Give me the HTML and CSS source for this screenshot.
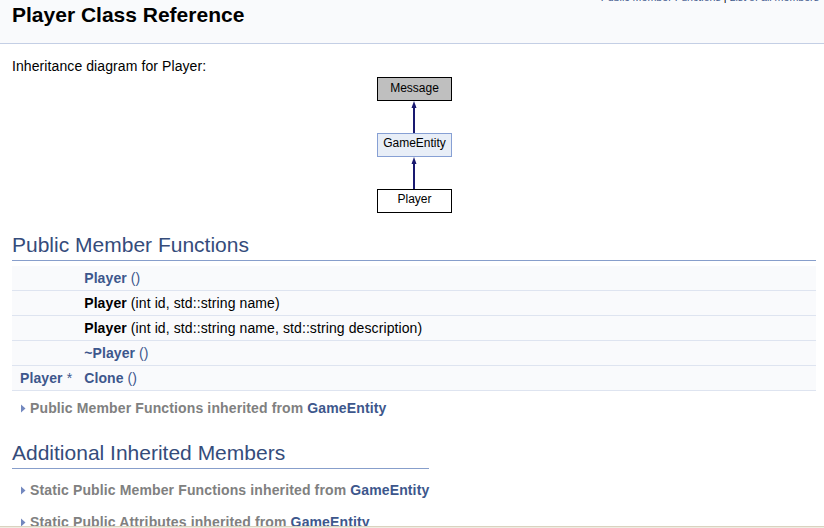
FILE: index.html
```html
<!DOCTYPE html>
<html>
<head>
<meta charset="utf-8">
<title>Player Class Reference</title>
<link rel="stylesheet" href="styles.css">
</head>
<body>
<div class="header">
  <div class="summary"><a href="#pub-methods">Public Member Functions</a> | <a href="#all">List of all members</a></div>
  <div class="title">Player Class Reference</div>
</div>
<div class="contents">
  <p class="intro">Inheritance diagram for Player:</p>
  <div class="diagram">
    <svg width="78" height="136" viewBox="0 0 78 136">
      <rect x="2.5" y="0.5" width="74" height="23" fill="#BFBFBF" stroke="#000"/>
      <text x="39.5" y="15" class="dtext">Message</text>
      <path d="M39 30V56" stroke="#191970" stroke-width="2"/>
      <polygon points="39,24 36.5,31 41.5,31" fill="#191970"/>
      <rect x="2.5" y="56.5" width="74" height="23" fill="#E8EEF7" stroke="#87A0D4"/>
      <text x="39.5" y="70" class="dtext">GameEntity</text>
      <path d="M39 86V112" stroke="#191970" stroke-width="2"/>
      <polygon points="39,80 36.5,87 41.5,87" fill="#191970"/>
      <rect x="2.5" y="112.5" width="74" height="23" fill="#FFFFFF" stroke="#000"/>
      <text x="39.5" y="126" class="dtext">Player</text>
    </svg>
  </div>
  <h2 class="groupheader" id="pub-methods">Public Member Functions</h2>
  <table class="memberdecls">
    <tr><td class="ml"></td><td class="mr"><a class="el" href="#a1">Player</a> <span class="lk">()</span></td></tr>
    <tr><td class="ml"></td><td class="mr"><b>Player</b> (int id, std::string name)</td></tr>
    <tr><td class="ml"></td><td class="mr"><b>Player</b> (int id, std::string name, std::string description)</td></tr>
    <tr><td class="ml"></td><td class="mr"><a class="el" href="#a4">~Player</a> <span class="lk">()</span></td></tr>
    <tr><td class="ml"><a class="el" href="#top">Player</a><span class="lk"> *</span>&#160;</td><td class="mr"><a class="el" href="#a5">Clone</a> <span class="lk">()</span></td></tr>
  </table>
  <div class="inherit">
    <svg viewBox="0 0 9 9"><polygon points="4,0.5 8.5,4.5 4,8.5"/></svg>
    <span>Public Member Functions inherited from <a class="el" href="#ge">GameEntity</a></span>
  </div>
  <div class="additional">
    <h2 class="groupheader">Additional Inherited Members</h2>
    <div class="inherit">
      <svg viewBox="0 0 9 9"><polygon points="4,0.5 8.5,4.5 4,8.5"/></svg>
      <span>Static Public Member Functions inherited from <a class="el" href="#ge">GameEntity</a></span>
    </div>
    <div class="inherit">
      <svg viewBox="0 0 9 9"><polygon points="4,0.5 8.5,4.5 4,8.5"/></svg>
      <span>Static Public Attributes inherited from <a class="el" href="#ge">GameEntity</a></span>
    </div>
  </div>
</div>
<div class="bottombar"></div>
</body>
</html>
```

FILE: styles.css
```css
html, body {
  margin: 0;
  padding: 0;
  background: #FFFFFF;
}
body {
  font-family: "Liberation Sans", Arial, sans-serif;
  font-size: 14px;
  line-height: 22px;
  color: #000000;
}
a {
  color: #3D578C;
  text-decoration: none;
}
a.el {
  font-weight: bold;
}
.header {
  height: 43px;
  background: #F9FAFC;
  border-bottom: 1px solid #C4CFE5;
  display: flex;
  flex-direction: column;
  padding-left: 12px;
}
.summary {
  margin-top: -10px;
  height: 14px;
  line-height: 14px;
  font-size: 10.67px;
  text-align: right;
  padding-right: 5px;
}
.title {
  font-size: 21px;
  font-weight: bold;
  line-height: 22px;
}
.contents {
  padding: 0 8px 0 12px;
}
.intro {
  margin: 12px 0 0;
  line-height: 21px;
  letter-spacing: 0.09px;
}
.diagram {
  display: flex;
  justify-content: center;
}
.diagram svg {
  display: block;
}
.dtext {
  font-family: "Liberation Sans", Arial, sans-serif;
  font-size: 12px;
  text-anchor: middle;
  fill: #000000;
}
.groupheader {
  font-size: 21px;
  font-weight: normal;
  color: #354C7B;
  line-height: 28px;
  margin: 18px 0 5px;
  padding-bottom: 1px;
  border-bottom: 1px solid #879ECB;
  letter-spacing: 0;
}
.memberdecls {
  width: 100%;
  border-collapse: collapse;
  border-spacing: 0;
  letter-spacing: 0.1px;
}
.memberdecls td {
  background: #F9FAFC;
  border-bottom: 1px solid #DEE4F0;
  padding: 1px 0 1px 8px;
  white-space: nowrap;
  vertical-align: top;
}
.memberdecls td.ml {
  width: 1%;
  text-align: right;
}
.memberdecls td.mr {
  padding-right: 8px;
}
.lk {
  color: #3D578C;
}
.inherit {
  display: flex;
  align-items: center;
  padding: 6px 0 2px 5px;
  font-weight: bold;
  color: #808080;
  white-space: nowrap;
  letter-spacing: 0.13px;
}
.inherit svg {
  width: 9px;
  height: 9px;
  margin-right: 4px;
  flex: none;
  fill: #7388BF;
}
.additional {
  width: max-content;
}
.additional .groupheader {
  margin: 18px 0 4px;
}
.additional .inherit + .inherit {
  margin-top: 2px;
}
.bottombar {
  position: fixed;
  left: 0;
  right: 0;
  bottom: 0;
  height: 1px;
  border-top: 1px solid #D9D3BF;
  background: #EFECE3;
}
```
